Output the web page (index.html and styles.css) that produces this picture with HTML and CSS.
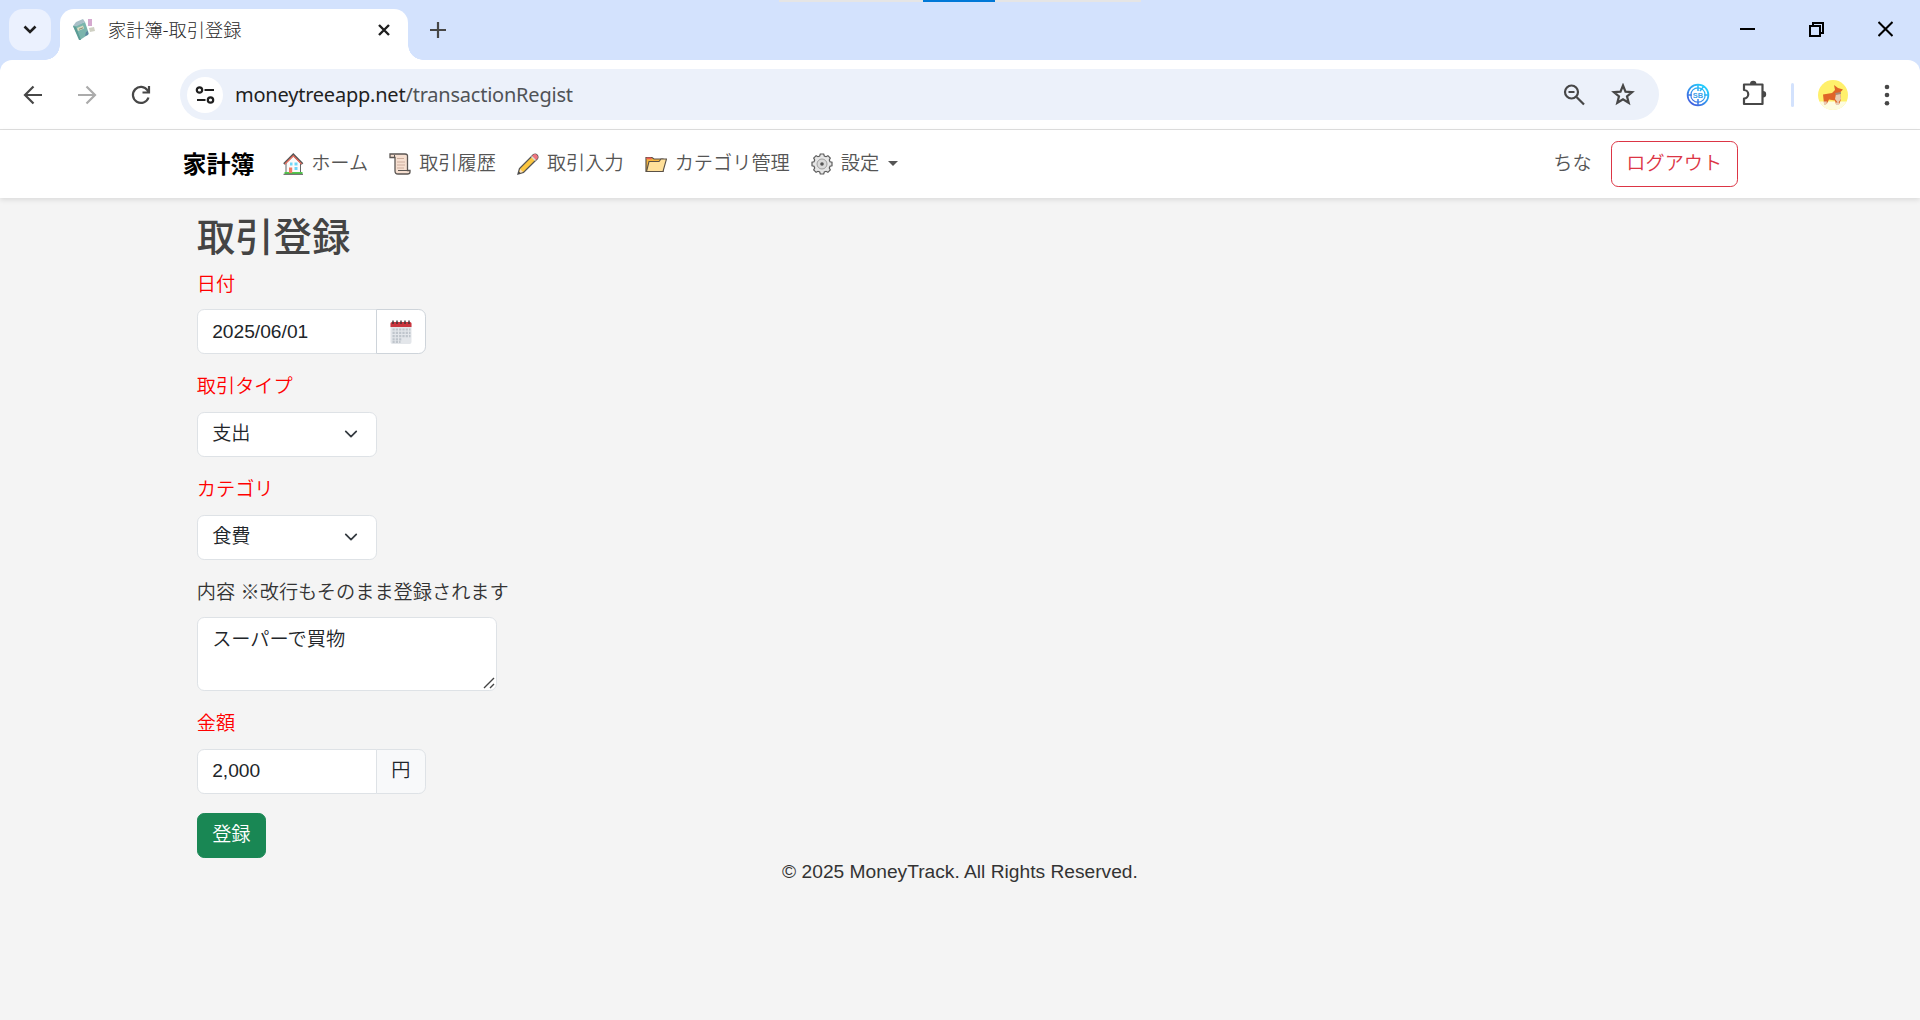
FILE: index.html
```html
<!DOCTYPE html>
<html lang="ja">
<head>
<meta charset="UTF-8">
<meta name="viewport" content="width=device-width, initial-scale=1">
<title>家計簿-取引登録</title>
<link rel="stylesheet" href="styles.css">
</head>
<body>

<!-- ブラウザ -->
<div class="tab-strip">
  <div class="window-progress"><span></span></div>
  <div class="tab-search">
    <svg width="14" height="10" viewBox="0 0 14 10"><path d="M1.5 1.5 7 7l5.500-5.500" fill="none" stroke="#1f1f1f" stroke-width="2.600"/></svg>
  </div>
  <div class="tab">
    <svg class="favicon" width="24" height="24" viewBox="0 0 24 24">
      <path d="M1 8 13 4l4 12-9 6z" fill="#7bb5ad"/>
      <path d="M1 8 4 4l7-3 2 3-8 4z" fill="#a9c0c8"/>
      <path d="m1 8 3 1 5 13H7z" fill="#5b9c95"/>
      <path d="m5 10 6-2.500 1 3L6 13z" fill="#d8dcc0"/>
      <path d="M7 11.300l4-1.500" stroke="#8a8f78" stroke-width="1"/>
      <path d="M16 1h4v7h-4z" fill="#d5a9cf"/>
      <path d="m17 10 5-1 1 4-5 1z" fill="#cfd0c3"/>
      <path d="m14 14 2-1v4l-3 1z" fill="#5d87a0"/>
    </svg>
    <span class="tab-title">家計簿-取引登録</span>
    <svg class="tab-close" width="12" height="12" viewBox="0 0 12 12"><path d="m1 1 10 10M11 1 1 11" stroke="#1f1f1f" stroke-width="2.400"/></svg>
  </div>
  <svg class="new-tab" width="16" height="16" viewBox="0 0 16 16"><path d="M8 0v16M0 8h16" stroke="#474747" stroke-width="2.200"/></svg>
  <div class="window-buttons">
    <svg width="15" height="16" viewBox="0 0 15 16"><path d="M0 8h15" stroke="#000" stroke-width="2"/></svg>
    <svg width="15" height="16" viewBox="0 0 15 16"><path d="M1 5h10v10H1zM4 5V2h10v10h-3" fill="none" stroke="#000" stroke-width="2"/></svg>
    <svg width="15" height="16" viewBox="0 0 15 16"><path d="m.5 1 14 14M14.500 1l-14 14" stroke="#000" stroke-width="2"/></svg>
  </div>
</div>

<div class="toolbar-wrap">
<div class="toolbar">
  <div class="toolbar-nav">
    <svg width="20" height="20" viewBox="0 0 20 20"><path d="M19 10H3M10.500 1.500 2 10l8.500 8.500" fill="none" stroke="#474747" stroke-width="2.200"/></svg>
    <svg width="20" height="20" viewBox="0 0 20 20"><path d="M1 10h16M9.500 1.500 18 10l-8.500 8.500" fill="none" stroke="#ababab" stroke-width="2.200"/></svg>
    <svg width="20" height="20" viewBox="0 0 20 20"><path d="M17.500 12.500A8 8 0 1 1 16.600 5.500L18 7M18 1v6.500h-6.500" fill="none" stroke="#474747" stroke-width="2.200"/></svg>
  </div>
  <div class="address">
    <div class="site-info">
      <svg width="20" height="18" viewBox="0 0 20 18"><g fill="none" stroke="#1f1f1f" stroke-width="2.200"><circle cx="4.500" cy="4" r="2.700"/><circle cx="15.500" cy="14" r="2.700"/><path d="M9.500 4H19M2 14h8.500"/></g></svg>
    </div>
    <div class="url">moneytreeapp.net<span>/transactionRegist</span></div>
    <svg class="zoom-icon" width="22" height="22" viewBox="0 0 22 22"><g fill="none" stroke="#474747" stroke-width="2.200"><circle cx="8.500" cy="8" r="6.500"/><path d="M13.500 13 21 20.500M5.500 8h6"/></g></svg>
    <svg class="star-icon" width="24" height="24" viewBox="0 0 24 24"><path d="m12 2.500 2.500 6.200 6.600.5-5.100 4.200 1.700 6.400-5.700-3.600-5.700 3.600 1.700-6.400-5.100-4.200 6.600-.5z" fill="none" stroke="#474747" stroke-width="2.200"/></svg>
  </div>
  <svg class="ext-icon" width="24" height="24" viewBox="0 0 24 24">
    <defs><linearGradient id="radar" gradientUnits="userSpaceOnUse" x1="20" y1="2" x2="4" y2="22"><stop offset="0" stop-color="#20d8ff"/><stop offset="1" stop-color="#4457dd"/></linearGradient></defs>
    <g fill="none" stroke="url(#radar)"><circle cx="12" cy="12" r="10.400" stroke-width="1.700"/><circle cx="12" cy="12" r="7.200" stroke-width="1.200"/><path d="M12 1v7M12 16v7M1 12h5M18 12h5M14 8l4-5" stroke-width="1.500"/></g>
    <text class="radar-text" x="12" y="14.700" text-anchor="middle">SB</text>
  </svg>
  <svg class="puzzle-icon" width="26" height="26" viewBox="0 0 26 26"><path d="M3 4.500h18.500V24H3v-5.500a4.200 4.200 0 0 0 0-8.500z" fill="none" stroke="#474747" stroke-width="2.200" stroke-linejoin="round"/><path d="M9 4a3.200 3.200 0 0 1 6.400 0zM22 11a3.200 3.200 0 0 1 0 6.400z" fill="#474747"/></svg>
  <span class="toolbar-divider"></span>
  <svg class="avatar" width="30" height="30" viewBox="0 0 30 30">
    <circle cx="15" cy="15" r="15" fill="#fff06b"/>
    <path d="M1.500 21.500h27A15 15 0 0 1 1.500 21.500z" fill="#fdfce0"/>
    <path d="M5 14.500 14 13l3-3-1-5 4 3 5 1.500-3 3 1 7-2 5h-3l-1-4-6-1-2 4H6z" fill="#df6428"/>
    <path d="m18 14 4-1 1 6-3 4-3-4zM6 21.500h3L8 25H6zM18 22.500h3V25h-3z" fill="#e9ccb2"/>
    <path d="m17 13 6-1v2l-5 1z" fill="#a88b78"/>
  </svg>
  <svg class="menu-icon" width="6" height="22" viewBox="0 0 6 22"><g fill="#474747"><circle cx="3" cy="3" r="2.300"/><circle cx="3" cy="11" r="2.300"/><circle cx="3" cy="19.300" r="2.300"/></g></svg>
</div>
</div>

<!-- ナビゲーション -->
<nav class="navbar">
  <div class="navbar-inner">
    <a class="brand">家計簿</a>
    <ul class="nav">
      <li>
        <svg class="emoji" viewBox="0 0 22 22"><path d="M4 10v10h14.500V10L11.300 3z" fill="#fafafa" stroke="#666" stroke-width="1"/><path d="M2.500 20h18" stroke="#52c94b" stroke-width="2"/><path d="M2 11l9.300-9.300L20.500 11" fill="none" stroke="#555" stroke-width="2.400"/><path d="m3 11 8.300-8.200 8.200 8.200" fill="none" stroke="#f2705f" stroke-width="1.200"/><path d="M7 14.500h3.200V20H7z" fill="#f07a63"/><path d="M12.500 14h3v3h-3zM8 9.500h2.500v3H8zM12.500 9.500h3v3h-3z" fill="#6fd6f7"/><path d="M1.500 21.300h19.500" stroke="#555"/></svg>
        <span>ホーム</span>
      </li>
      <li>
        <svg class="emoji" viewBox="0 0 22 22"><path d="M1 4.500V1h15q3 0 2.500 3v13.500H21V19q0 2-2.500 2H9q-3 0-3-3V4.500z" fill="#f6dfd0" stroke="#5b5653" stroke-width="1.300"/><path d="M1 4.500h4.500V2M9 17.500h9.500" fill="none" stroke="#5b5653"/><path d="M8 5.500h7M8 9h8M8 12h8M8 15h7" stroke="#c8a897" stroke-width=".9"/></svg>
        <span>取引履歴</span>
      </li>
      <li>
        <svg class="emoji" viewBox="0 0 22 22"><path d="M1 21l1.500-5.500L16.500 1.500q2-1 3.500.5t.5 3.500L6.500 19.500z" fill="#fcc63f" stroke="#555" stroke-width="1.300"/><path d="m15 3 1.500-1.500q2-1 3.500.5t.5 3.500L19 7z" fill="#ef7480"/><path d="m14 4 1-1 4 4-1 1z" fill="#d9dde0"/><path d="m3 16 3 3-3.500 1z" fill="#f9dfc2"/><path d="M1 21l.8-2.500 1.700 1.600z" fill="#444"/></svg>
        <span>取引入力</span>
      </li>
      <li>
        <svg class="emoji" viewBox="0 0 22 22"><path d="M1 18.500V4.500h6L9 6h9v12.500z" fill="#f4b53e" stroke="#5a5147" stroke-width="1.200"/><path d="M1.500 4.500H6l1 1.800H1.500z" fill="#ee5a55"/><path d="M1.500 18.500 4 8.500h10L16 6h5.500L18 18.500z" fill="#ffe09a" stroke="#5a5147" stroke-width="1.100"/></svg>
        <span>カテゴリ管理</span>
      </li>
      <li>
        <svg class="emoji" viewBox="0 0 22 22"><path d="M9.300 1h3.400l.6 2 1.700.7 1.900-1 2.400 2.400-1 1.900.7 1.700 2 .6v3.400l-2 .6-.7 1.700 1 1.900-2.400 2.400-1.900-1-1.700.7-.6 2H9.300l-.6-2-1.700-.7-1.900 1-2.400-2.400 1-1.900-.7-1.700-2-.6V9.300l2-.6.7-1.700-1-1.900 2.400-2.400 1.900 1 1.700-.7z" fill="#e6e6e6" stroke="#5c5c5c" stroke-width="1.200"/><circle cx="11" cy="11" r="5" fill="#dadada" stroke="#999" stroke-width=".9"/><circle cx="11" cy="11" r="1.800" fill="#555"/></svg>
        <span>設定</span>
        <i class="caret"></i>
      </li>
    </ul>
    <span class="user-name">ちな</span>
    <button class="btn btn-logout" type="button">ログアウト</button>
  </div>
</nav>

<main class="content">
  <h2>取引登録</h2>
  <form>
    <div class="field">
      <label class="required">日付</label>
      <div class="input-group">
        <input class="control" type="text" value="2025/06/01">
        <button class="addon addon-date" type="button">
          <svg width="24" height="26" viewBox="0 0 24 26"><path d="M1.500 5h21v18q0 2-2 2h-17q-2 0-2-2z" fill="#e3e6ea"/><path d="M1.500 8V4.500q0-1.500 1.500-1.500h18q1.500 0 1.500 1.500V8z" fill="#c9353e"/><path d="M4 5V1.500M8 5V1.500M12 5V1.500M16 5V1.500M20 5V1.500" stroke="#403337" stroke-width="1.400"/><g stroke="#bfc5cc" stroke-width="2.200" stroke-dasharray="2.200 1.100"><path d="M3.500 10.500h18M3.500 13.800h18M3.500 17.100h18M3.500 20.400h9.500M3.500 23h8"/></g></svg>
        </button>
      </div>
    </div>
    <div class="field">
      <label class="required">取引タイプ</label>
      <select class="control select"><option>支出</option></select>
    </div>
    <div class="field">
      <label class="required">カテゴリ</label>
      <select class="control select"><option>食費</option></select>
    </div>
    <div class="field">
      <label>内容 ※改行もそのまま登録されます</label>
      <textarea class="control memo">スーパーで買物</textarea>
    </div>
    <div class="field">
      <label class="required">金額</label>
      <div class="input-group">
        <input class="control" type="text" value="2,000">
        <span class="addon">円</span>
      </div>
    </div>
    <button class="btn btn-submit" type="button">登録</button>
  </form>
</main>

<footer>&copy; 2025 MoneyTrack. All Rights Reserved.</footer>

</body>
</html>
```
FILE: styles.css
```css
* {
  box-sizing: border-box;
}

html {
  font-size: 19.2px;
}

body {
  margin: 0;
  min-height: 100vh;
  background: #f4f4f4;
  color: #333;
  font-family: "Liberation Sans", "Noto Sans CJK JP", sans-serif;
  font-weight: 350;
  line-height: 1.5;
  overflow: hidden;
}

svg {
  display: block;
  flex: none;
}

/* Browser frame */
.tab-strip {
  height: 60px;
  background: #d3e2fd;
  display: flex;
  padding: 9px 16px 0 9px;
}

.window-progress {
  position: absolute;
  top: 0;
  left: 779px;
  width: 362px;
  height: 2px;
  background: #e5e5e5;
}
.window-progress span {
  display: block;
  width: 72px;
  height: 2px;
  margin-left: 144px;
  background: #0078d7;
}

.tab-search {
  width: 42px;
  height: 42px;
  border-radius: 14px;
  background: #ebf1fe;
  display: flex;
  align-items: center;
  justify-content: center;
}

.tab {
  position: relative;
  width: 348px;
  margin-left: 9px;
  padding: 0 18px 9px 12px;
  background: #fff;
  border-radius: 14px 14px 0 0;
  display: flex;
  align-items: center;
}
.tab::before, .tab::after {
  content: "";
  position: absolute;
  bottom: 0;
  width: 15px;
  height: 15px;
}
.tab::before {
  left: -15px;
  background: radial-gradient(circle at 0 0, transparent 14.5px, #fff 15px);
}
.tab::after {
  right: -15px;
  background: radial-gradient(circle at 100% 0, transparent 14.5px, #fff 15px);
}

.tab-title {
  flex: 1;
  margin-left: 12px;
  font-family: "Noto Sans CJK JP", sans-serif;
  font-size: 18.2px;
  font-weight: 300;
  color: #1f1f1f;
}

.new-tab {
  margin: 13px 0 0 22px;
}

.window-buttons {
  margin: 12px 0 0 auto;
  display: flex;
  gap: 54px;
  padding-right: 11px;
}

.toolbar-wrap {
  background: #d3e2fd;
}

.toolbar {
  height: 70px;
  background: #fff;
  border-bottom: 1px solid #dfdfdf;
  border-radius: 12px 12px 0 0;
  display: flex;
  align-items: center;
  padding: 0 30px 0 23px;
}

.toolbar-nav {
  display: flex;
  gap: 34px;
  width: 157px;
}

.address {
  width: 1479px;
  height: 51px;
  border-radius: 26px;
  background: #ecf1fa;
  display: flex;
  align-items: center;
  padding: 0 24px 0 7px;
}

.site-info {
  width: 36px;
  height: 36px;
  border-radius: 50%;
  background: #fff;
  display: flex;
  align-items: center;
  justify-content: center;
}

.url {
  flex: 1;
  margin-left: 12px;
  font-family: "Noto Sans", sans-serif;
  font-size: 20px;
  font-weight: 400;
  letter-spacing: -0.22px;
  color: #1f1f1f;
}
.url span {
  color: #505357;
}

.zoom-icon {
  margin-right: 26px;
}

.ext-icon {
  margin-left: 27px;
}
.radar-text {
  font: bold 7.5px "Liberation Sans", sans-serif;
  fill: #3d9fe8;
}

.puzzle-icon {
  margin: -4px 0 0 31px;
}

.toolbar-divider {
  width: 3px;
  height: 24px;
  margin-left: 24px;
  border-radius: 2px;
  background: #d3e2fd;
}

.avatar {
  margin-left: 24px;
}

.menu-icon {
  margin-left: auto;
}

/* Navbar */
.navbar {
  height: 68px;
  background: #fff;
  box-shadow: 0 2px 5px rgba(0, 0, 0, 0.1);
}

.navbar-inner {
  width: 1584px;
  height: 100%;
  margin: 0 auto;
  padding: 0 14.4px;
  display: flex;
  align-items: center;
}

.brand {
  padding-top: 1px;
  font-size: 24px;
  font-weight: 700;
  color: #000;
}

.nav {
  list-style: none;
  margin: 0 auto 0 24px;
  padding: 0;
  display: flex;
  gap: 19.2px;
  color: #555;
}
.nav li {
  display: flex;
  align-items: center;
}

.emoji {
  width: 22px;
  height: 22px;
  margin: 0 6.8px 0 4px;
}
.nav li + li .emoji {
  margin: 0 7.8px 0 2px;
}

.caret {
  margin-left: 9px;
  border: 5.5px solid transparent;
  border-top-color: #555;
  border-bottom: 0;
}

.user-name {
  margin-right: 19.2px;
  color: #555;
}

.btn {
  padding: 7.2px 14.4px;
  border: 1px solid;
  border-radius: 7.2px;
  font: inherit;
}
.btn-logout {
  background: #fff;
  color: #dc3545;
}
.btn-submit {
  display: block;
  background: #198754;
  border-color: #198754;
  color: #fff;
}

/* Form */
.content {
  width: 1584px;
  margin: 0 auto;
  padding: 17px 28.8px 0;
}

h2 {
  margin: 0 0 9.6px;
  font-size: 38.4px;
  font-weight: 500;
  line-height: 1.2;
  color: #444;
}

.field {
  margin-bottom: 19.2px;
}

label {
  display: block;
  margin-bottom: 9.6px;
}
.required {
  color: #f00;
}

.control {
  display: block;
  width: 180px;
  height: 45.2px;
  padding: 7.2px 14.4px;
  border: 1px solid #dee2e6;
  border-radius: 7.2px;
  background-color: #fff;
  color: #212529;
  font: inherit;
}

.select {
  appearance: none;
  background-image: url("data:image/svg+xml,%3csvg xmlns='http://www.w3.org/2000/svg' viewBox='0 0 16 16'%3e%3cpath fill='none' stroke='%23343a40' stroke-linecap='round' stroke-linejoin='round' stroke-width='2' d='m2 5 6 6 6-6'/%3e%3c/svg%3e");
  background-repeat: no-repeat;
  background-position: right 17px center;
  background-size: 14.4px 14.4px;
}

.memo {
  width: 300px;
  height: 73.8px;
}
.memo::-webkit-resizer {
  background: url("data:image/svg+xml,%3csvg xmlns='http://www.w3.org/2000/svg' viewBox='0 0 15 15'%3e%3cpath stroke='%23444' stroke-width='1.4' d='M3 13 13 3M9 13l4-4'/%3e%3c/svg%3e") center / 100% no-repeat;
}

.input-group {
  display: flex;
}
.input-group .control {
  border-radius: 7.2px 0 0 7.2px;
}

.addon {
  width: 50px;
  margin-left: -1px;
  padding: 0;
  border: 1px solid #dee2e6;
  border-radius: 0 7.2px 7.2px 0;
  background: #f8f9fa;
  color: #212529;
  display: flex;
  align-items: center;
  justify-content: center;
}
.addon-date {
  padding-top: 1px;
  background: #fff;
  border-color: #ced4da;
}

footer {
  text-align: center;
}
```
